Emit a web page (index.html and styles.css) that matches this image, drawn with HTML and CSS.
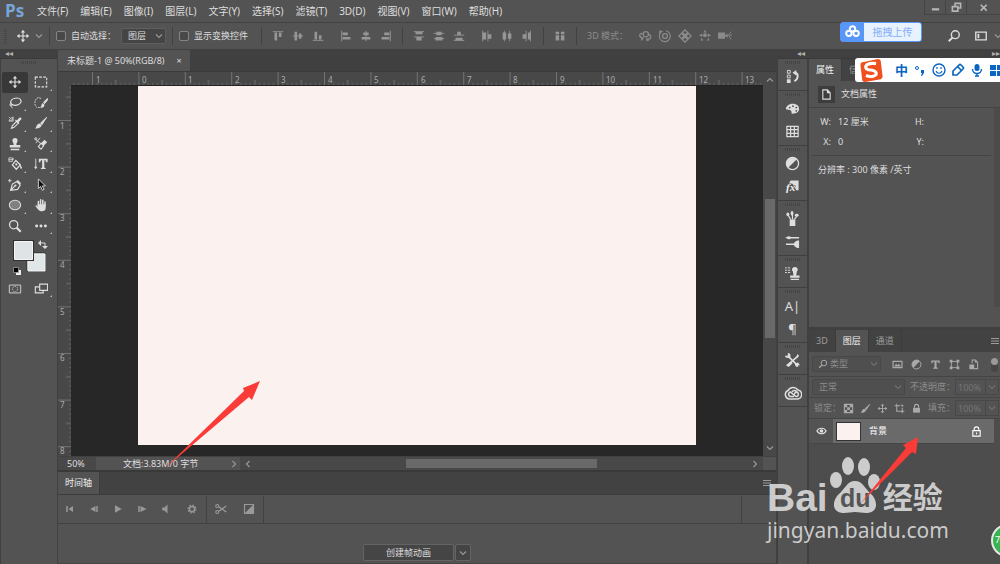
FILE: index.html
```html
<!DOCTYPE html>
<html lang="zh-CN">
<head>
    <meta charset="UTF-8">
    <meta name="viewport" content="width=device-width, initial-scale=1.0">
    <title>未标题-1 @ 50%(RGB/8)</title>
    <link rel="stylesheet" href="styles.css">
</head>
<body>
    <svg class="sprite" aria-hidden="true">
        <symbol id="move" viewBox="0 0 16 16"><path d="M8 2v12M2 8h12" stroke="currentColor" stroke-width="1.3"/><path d="M8 1l2.6 3H5.4zM8 15l2.6-3H5.4zM1 8l3-2.6v5.2zM15 8l-3-2.6v5.2z" fill="currentColor"/></symbol>
        <symbol id="chevron" viewBox="0 0 8 8"><path d="M1 2.5l3 3 3-3" fill="none" stroke="currentColor" stroke-width="1.1"/></symbol>
        <symbol id="brush" viewBox="0 0 16 16"><path d="M14.500 1.500L7.500 8l1.500 2z" fill="currentColor" stroke="currentColor"/><path d="M6.500 8.500l2.200 2.200C8 14 4 14.500 1 14.500c2-1.500 1.500-5.500 5.500-6z" fill="currentColor"/></symbol>
        <symbol id="stamp" viewBox="0 0 16 16"><path d="M8 1a3 3 0 0 1 3 3c0 2-1.500 2.500-1.500 5h4.500v3H2V9h4.500C6.500 6.500 5 6 5 4a3 3 0 0 1 3-3zM3 13.500h10V15H3z" fill="currentColor"/></symbol>
        <symbol id="menu" viewBox="0 0 10 8"><path d="M1 1.500h8M1 4h8M1 6.500h8" stroke="currentColor"/></symbol>
        <symbol id="search" viewBox="0 0 16 16"><circle cx="9.500" cy="6.500" r="4.500" fill="none" stroke="currentColor" stroke-width="1.600"/><path d="M6.200 9.800L2 14" stroke="currentColor" stroke-width="2.200"/></symbol>
        <symbol id="half" viewBox="0 0 16 16"><circle cx="8" cy="8" r="6.500" fill="none" stroke="currentColor" stroke-width="1.400"/><path d="M12.600 3.400A6.500 6.500 0 0 0 3.400 12.600z" fill="currentColor"/></symbol>
        <symbol id="lock" viewBox="0 0 16 16"><path d="M5 7V5a3 3 0 0 1 6 0v2" fill="none" stroke="currentColor" stroke-width="1.600"/><path d="M3 7h10v7H3z" fill="currentColor"/></symbol>
    </svg>

    <header class="menu-bar">
        <span class="logo">Ps</span>
        <nav>
            <button>文件(F)</button>
            <button>编辑(E)</button>
            <button>图像(I)</button>
            <button>图层(L)</button>
            <button>文字(Y)</button>
            <button>选择(S)</button>
            <button>滤镜(T)</button>
            <button>3D(D)</button>
            <button>视图(V)</button>
            <button>窗口(W)</button>
            <button>帮助(H)</button>
        </nav>
        <div class="window-buttons">
            <button aria-label="最小化"><svg viewBox="0 0 12 12"><path d="M2 8h8" stroke="currentColor" stroke-width="2.500"/></svg></button>
            <button aria-label="还原"><svg viewBox="0 0 12 12"><path d="M4.500 4V1.500h6v5H8M1.500 5h6v5h-6z" fill="none" stroke="currentColor" stroke-width="1.800"/></svg></button>
            <button class="close" aria-label="关闭"><svg viewBox="0 0 12 12"><path d="M3 3l6.500 6.500M9.500 3L3 9.500" stroke="currentColor" stroke-width="1.900"/></svg></button>
        </div>
    </header>

    <div class="options-bar">
        <span class="grip-v"></span>
        <button class="current-tool" aria-label="移动工具"><svg class="icon16"><use href="#move"/></svg><svg class="icon8"><use href="#chevron"/></svg></button>
        <span class="sep"></span>
        <label class="check"><input type="checkbox">自动选择：</label>
        <span class="select option-select"><select aria-label="自动选择"><option>图层</option></select><svg class="icon8"><use href="#chevron"/></svg></span>
        <span class="sep"></span>
        <label class="check"><input type="checkbox">显示变换控件</label>
        <span class="sep sep-wide"></span>
        <div class="icon-set">
            <button aria-label="顶对齐"><svg viewBox="0 0 16 16"><path d="M2 3h12" stroke="currentColor"/><path d="M4 4h3v9H4zM9 4h3v5H9z" fill="currentColor"/></svg></button>
            <button aria-label="垂直居中对齐"><svg viewBox="0 0 16 16"><path d="M2 8h12" stroke="currentColor"/><path d="M4 3h3v10H4zM9 5h3v6H9z" fill="currentColor"/></svg></button>
            <button aria-label="底对齐"><svg viewBox="0 0 16 16"><path d="M2 13h12" stroke="currentColor"/><path d="M4 3h3v9H4zM9 7h3v5H9z" fill="currentColor"/></svg></button>
        </div>
        <div class="icon-set">
            <button aria-label="左对齐"><svg viewBox="0 0 16 16"><path d="M3 2v12" stroke="currentColor"/><path d="M4 4h6v3H4zM4 9h9v3H4z" fill="currentColor"/></svg></button>
            <button aria-label="水平居中对齐"><svg viewBox="0 0 16 16"><path d="M8 2v12" stroke="currentColor"/><path d="M5 4h6v3H5zM3 9h10v3H3z" fill="currentColor"/></svg></button>
            <button aria-label="右对齐"><svg viewBox="0 0 16 16"><path d="M13 2v12" stroke="currentColor"/><path d="M6 4h6v3H6zM3 9h9v3H3z" fill="currentColor"/></svg></button>
        </div>
        <span class="sep"></span>
        <div class="icon-set">
            <button aria-label="按顶分布"><svg viewBox="0 0 16 16"><path d="M2 3h12M2 9h12" stroke="currentColor"/><path d="M4 3h8v3H4zM5 9h6v4H5z" fill="currentColor"/></svg></button>
            <button aria-label="垂直居中分布"><svg viewBox="0 0 16 16"><path d="M2 5h12M2 11h12" stroke="currentColor"/><path d="M5 3h6v4H5zM4 9h8v4H4z" fill="currentColor"/></svg></button>
            <button aria-label="按底分布"><svg viewBox="0 0 16 16"><path d="M2 7h12M2 13h12" stroke="currentColor"/><path d="M6 3h4v4H6zM4 10h8v3H4z" fill="currentColor"/></svg></button>
        </div>
        <div class="icon-set">
            <button aria-label="按左分布"><svg viewBox="0 0 16 16"><path d="M3 2v12M9 2v12" stroke="currentColor"/><path d="M3 4h4v8H3zM9 6h4v5H9z" fill="currentColor"/></svg></button>
            <button aria-label="水平居中分布"><svg viewBox="0 0 16 16"><path d="M5 2v12M11 2v12" stroke="currentColor"/><path d="M3 4h4v8H3zM9 5h4v6H9z" fill="currentColor"/></svg></button>
            <button aria-label="按右分布"><svg viewBox="0 0 16 16"><path d="M7 2v12M12 2v12" stroke="currentColor"/><path d="M3 6h4v5H3zM9 4h3v8H9z" fill="currentColor"/></svg></button>
        </div>
        <span class="sep"></span>
        <div class="icon-set">
            <button aria-label="自动对齐图层"><svg viewBox="0 0 16 16"><path d="M3 3h4v3H3zM9 3h4v3H9zM3 7h4v6H3zM9 7h4v6H9z" fill="currentColor"/></svg></button>
        </div>
        <span class="sep"></span>
        <span class="mode-label">3D 模式：</span>
        <div class="icon-set dim">
            <button aria-label="旋转 3D 对象"><svg viewBox="0 0 16 16"><path d="M5 10C1 9 1 6 4 5l3 1M11 6c4 0 4 3 3 5l-4 1" fill="none" stroke="currentColor" stroke-width="1.500"/><circle cx="9" cy="6" r="3" fill="none" stroke="currentColor" stroke-width="1.300"/><path d="M3 9l4 1-3 4zM9 10l1 4 3-1z" fill="currentColor"/></svg></button>
            <button aria-label="滚动 3D 对象"><svg viewBox="0 0 16 16"><path d="M3 4A6.300 6.300 0 1 0 9 2" fill="none" stroke="currentColor" stroke-width="1.300"/><circle cx="8" cy="8" r="2.800" fill="none" stroke="currentColor" stroke-width="1.500"/><path d="M1 5l1-4 4 2z" fill="currentColor"/></svg></button>
            <button aria-label="拖动 3D 对象"><svg viewBox="0 0 16 16"><path d="M8 1l3 3-3 3-3-3zM8 9l3 3-3 3-3-3zM1 8l3-3 3 3-3 3zM9 8l3-3 3 3-3 3z" fill="none" stroke="currentColor" stroke-width="1.500"/></svg></button>
            <button aria-label="滑动 3D 对象"><svg viewBox="0 0 16 16"><circle cx="8" cy="7" r="2.200" fill="currentColor"/><path d="M8 1l2 3H6zM1 7l4-2v4zM15 7l-4-2v4zM3 13l1-3 2 3zM13 13l-1-3-2 3z" fill="currentColor"/></svg></button>
            <button aria-label="缩放 3D 对象"><svg viewBox="0 0 16 16"><path d="M0 4h8v7H0zM8 7l3-2v5L8 8z" fill="currentColor"/><path d="M15 3l-3 4 3 5M13 7h3" fill="none" stroke="currentColor"/></svg></button>
        </div>
        <div class="options-right">
            <button aria-label="搜索"><svg class="icon16"><use href="#search"/></svg></button>
            <button aria-label="工作区"><svg class="icon16" viewBox="0 0 16 16"><path d="M2 3.500h12v9H2z" fill="none" stroke="currentColor" stroke-width="1.500"/><path d="M4 5.500h2v5H4z" fill="currentColor"/></svg><svg class="icon8"><use href="#chevron"/></svg></button>
        </div>
        <button class="upload"><svg viewBox="0 0 24 20"><g fill="none" stroke="#fff" stroke-width="2.200"><circle cx="12" cy="6.500" r="3"/><circle cx="8" cy="11.500" r="3"/><circle cx="16" cy="11.500" r="3"/></g></svg><span>拖拽上传</span></button>
    </div>

    <div class="workspace">
        <aside class="toolbox">
            <div class="dock-head">◂◂</div>
            <div class="tools-body">
                <span class="grip"></span>
                <div class="tools">
                    <button class="active" aria-label="移动工具"><svg><use href="#move"/></svg></button>
                    <button class="more" aria-label="矩形选框工具"><svg viewBox="0 0 16 16"><path d="M1.500 2.500h13v11h-13z" fill="none" stroke="currentColor" stroke-width="1.300" stroke-dasharray="3 1.500"/></svg></button>
                    <button class="more" aria-label="套索工具"><svg viewBox="0 0 16 16"><ellipse cx="9" cy="6.500" rx="6" ry="4" transform="rotate(-12 9 6.500)" fill="none" stroke="currentColor" stroke-width="1.400"/><path d="M4 8c-3 1-2 4 0 3s0-3-1-1 2 2 2 4" fill="none" stroke="currentColor"/></svg></button>
                    <button class="more" aria-label="快速选择工具"><svg viewBox="0 0 16 16"><path d="M8 3C4 0 1 4 1 8s2 6 6 5" fill="none" stroke="currentColor" stroke-dasharray="2 1"/><path d="M15.500 2l-5 5 1.500 2.500 4-5z" fill="currentColor"/><path d="M10 8l2 2c0 3-3 4-5 3 2-1 1-4 3-5z" fill="currentColor"/></svg></button>
                    <button class="more" aria-label="吸管工具"><svg viewBox="0 0 16 16"><path d="M1 1l3 3M1 5h4V1zM6 1v5H1" fill="none" stroke="currentColor" stroke-width=".8"/><path d="M4 14l1-3 5-5 2 2-5 5z" fill="none" stroke="currentColor" stroke-width="1.300"/><path d="M8 5l1-1 1 1 3-3c2-1 3 1 2 2l-3 3 1 1-1 1z" fill="currentColor"/></svg></button>
                    <button class="more" aria-label="画笔工具"><svg><use href="#brush"/></svg></button>
                    <button class="more" aria-label="仿制图章工具"><svg><use href="#stamp"/></svg></button>
                    <button class="more" aria-label="橡皮擦工具"><svg viewBox="0 0 16 16"><path d="M1 2l6 5M7 1L2 7" stroke="currentColor"/><circle cx="2" cy="2" r="1.200" fill="none" stroke="currentColor"/><path d="M12 3l3 3-4 4-3-3z" fill="currentColor"/><path d="M8 7l3 3-3 4-3-3z" fill="none" stroke="currentColor" stroke-width="1.300"/></svg></button>
                    <button class="more" aria-label="油漆桶工具"><svg viewBox="0 0 16 16"><path d="M1 1h4v4H1zM1 3h5V1" fill="none" stroke="currentColor" stroke-width=".9"/><path d="M9 4l5 5-4.500 5L5 9z" fill="none" stroke="currentColor" stroke-width="1.400"/><circle cx="9.500" cy="8.500" r="1.300" fill="currentColor"/><path d="M13 7l3 5c0 2-2 2-2 0z" fill="currentColor"/></svg></button>
                    <button class="more" aria-label="文字工具"><svg viewBox="0 0 16 16"><path d="M2 2v10" stroke="currentColor"/><path d="M0 11h4l-2 3zM5.500 2h10v4h-1.500L13 3.800h-1.200V12l1.500.8v1H7.800v-1l1.500-.8V3.800H8L7 6H5.500z" fill="currentColor"/></svg></button>
                    <button class="more" aria-label="钢笔工具"><svg viewBox="0 0 16 16"><path d="M0 3h4M2 1v4" stroke="currentColor"/><path d="M3 14l2-7 5-3 4 4-3 5zM3 14l5-5" fill="none" stroke="currentColor" stroke-width="1.300"/><path d="M11 2l4 4-1.500 1L10 4z" fill="currentColor"/><circle cx="8.500" cy="8.500" r="1.200" fill="currentColor"/></svg></button>
                    <button class="more" aria-label="路径选择工具"><svg viewBox="0 0 16 16"><path d="M5 1v11l2.500-2.500L9.500 14l2-1-2-4H13z" fill="#111" stroke="currentColor"/></svg></button>
                    <button class="more" aria-label="椭圆工具"><svg viewBox="0 0 16 16"><ellipse cx="8" cy="8" rx="6.500" ry="5.500" fill="#808080" stroke="currentColor" stroke-width="1.200"/></svg></button>
                    <button class="more" aria-label="抓手工具"><svg viewBox="0 0 16 16"><path d="M5 9V4M7.500 8V2M10 8V2.500M12.500 9V4.500" stroke="currentColor" stroke-width="1.700" stroke-linecap="round"/><path d="M4 7h9.400v4c0 3-2 4-4.400 4-3 0-4-1.500-7.500-6 1-1.500 2 0 3 1z" fill="currentColor"/></svg></button>
                    <button aria-label="缩放工具"><svg viewBox="0 0 16 16"><circle cx="6.500" cy="6.500" r="4.700" fill="none" stroke="currentColor" stroke-width="1.500"/><path d="M10 10l4.500 4.500" stroke="currentColor" stroke-width="2.600"/></svg></button>
                    <button class="more" aria-label="编辑工具栏"><svg viewBox="0 0 16 16"><circle cx="3" cy="8" r="1.700" fill="currentColor"/><circle cx="8" cy="8" r="1.700" fill="currentColor"/><circle cx="13" cy="8" r="1.700" fill="currentColor"/></svg></button>
                </div>
                <svg class="swatches" viewBox="0 0 54 40"><path d="M26 14h18v18H26z" fill="#e1e6e8" stroke="#303030"/><path d="M27 15h17v17H27z" fill="#e1e6e8" stroke="#f5f5f5"/><path d="M12 1h21v21H12z" fill="#303030"/><path d="M13.500 2.500h18v18h-18z" fill="#dfe3e5" stroke="#f5f5f5"/><path d="M40 4h4v4" fill="none" stroke="#ddd"/><path d="M37 4l3-3v6zM44 10l-3-3h6z" fill="#ddd"/><path d="M15 31h5v5h-5z" fill="#eee"/><path d="M12.500 28.500h5v5h-5z" fill="#000" stroke="#aaa" stroke-width=".7"/></svg>
                <div class="screen-modes">
                    <button aria-label="快速蒙版"><svg viewBox="0 0 16 16"><path d="M1.500 3.500h13v9h-13z" fill="none" stroke="currentColor"/><circle cx="8" cy="8" r="3" fill="none" stroke="currentColor" stroke-dasharray="1 1"/></svg></button>
                    <button class="more" aria-label="屏幕模式"><svg viewBox="0 0 16 16"><path d="M6.500 2.500h9v7h-9zM6 5.500H1.500v7h9V10" fill="none" stroke="currentColor" stroke-width="1.300"/></svg></button>
                </div>
            </div>
        </aside>

        <main class="center">
            <div class="doc-tabs">
                <div class="doc-tab">未标题-1 @ 50%(RGB/8)<button aria-label="关闭文档">×</button></div>
            </div>
            <div class="editor">
                <div class="corner"></div>
                <svg class="ruler-h" height="14">
                    <defs><pattern id="cmH" x="21" width="46.400" height="14" patternUnits="userSpaceOnUse"><path d="M.5 0v14M23.700 8v6" stroke="#727272"/><path d="M5.100 11v3M9.800 11v3M14.400 11v3M19 11v3M28.300 11v3M33 11v3M37.600 11v3M42.200 11v3" stroke="#636363"/></pattern></defs>
                    <rect width="100%" height="14" fill="url(#cmH)"/>
                    <g class="ruler-text"><text x="25" y="11">1</text><text x="71" y="11">0</text><text x="117" y="11">1</text><text x="164" y="11">2</text><text x="210" y="11">3</text><text x="257" y="11">4</text><text x="303" y="11">5</text><text x="350" y="11">6</text><text x="396" y="11">7</text><text x="442" y="11">8</text><text x="489" y="11">9</text><text x="535" y="11">10</text><text x="582" y="11">11</text><text x="628" y="11">12</text><text x="674" y="11">13</text></g>
                </svg>
                <svg class="ruler-v" width="13">
                    <defs><pattern id="cmV" y="34" width="13" height="46.600" patternUnits="userSpaceOnUse"><path d="M0 .5h13M8 23.700h5" stroke="#727272"/><path d="M11 5.100h2M11 9.800h2M11 14.400h2M11 19h2M11 28.300h2M11 33h2M11 37.600h2M11 42.200h2" stroke="#636363"/></pattern></defs>
                    <rect width="13" height="100%" fill="url(#cmV)"/>
                    <g class="ruler-text"><text x="2" y="43">1</text><text x="2" y="89">2</text><text x="2" y="135">3</text><text x="2" y="182">4</text><text x="2" y="229">5</text><text x="2" y="275">6</text><text x="2" y="322">7</text><text x="2" y="368">8</text></g>
                </svg>
                <div class="stage"><div class="artboard"></div></div>
                <div class="scroll-v">
                    <svg class="icon8 flip"><use href="#chevron"/></svg>
                    <div class="thumb-v"></div>
                    <svg class="icon8"><use href="#chevron"/></svg>
                </div>
            </div>
            <div class="status">
                <span class="zoom">50%</span>
                <span class="doc-size">文档:3.83M/0 字节</span>
                <svg class="icon8 right"><use href="#chevron"/></svg>
                <div class="scroll-h"><svg class="icon8 left"><use href="#chevron"/></svg><div class="thumb-h"></div><svg class="icon8 right"><use href="#chevron"/></svg></div>
            </div>
            <section class="timeline">
                <div class="panel-tabs"><button class="active">时间轴</button><button class="panel-menu" aria-label="菜单"><svg><use href="#menu"/></svg></button></div>
                <div class="controls">
                    <button aria-label="第一帧"><svg viewBox="0 0 16 16"><path d="M4 4v8" stroke="currentColor" stroke-width="2"/><path d="M12 4v8L6 8z" fill="currentColor"/></svg></button>
                    <button aria-label="上一帧"><svg viewBox="0 0 16 16"><path d="M12 4v8" stroke="currentColor" stroke-width="2"/><path d="M10 4v8L3 8z" fill="currentColor"/></svg></button>
                    <button aria-label="播放"><svg viewBox="0 0 16 16"><path d="M4 3v10l9-5z" fill="currentColor"/></svg></button>
                    <button aria-label="下一帧"><svg viewBox="0 0 16 16"><path d="M4 4v8" stroke="currentColor" stroke-width="2"/><path d="M6 4v8l8-4z" fill="currentColor"/></svg></button>
                    <button aria-label="音频"><svg viewBox="0 0 16 16"><path d="M3 6h3l4-4v12l-4-4H3z" fill="currentColor"/></svg></button>
                    <button class="wide" aria-label="设置"><svg viewBox="0 0 16 16"><circle cx="8" cy="8" r="3.500" fill="none" stroke="currentColor" stroke-width="2"/><circle cx="8" cy="8" r="5.200" fill="none" stroke="currentColor" stroke-width="1.600" stroke-dasharray="2 2.080"/></svg></button>
                    <span class="rule"></span>
                    <button class="wide" aria-label="拆分"><svg viewBox="0 0 16 16"><circle cx="3" cy="4" r="2" fill="none" stroke="currentColor" stroke-width="1.500"/><circle cx="3" cy="12" r="2" fill="none" stroke="currentColor" stroke-width="1.500"/><path d="M5 5l10 7M5 11l10-7" stroke="currentColor" stroke-width="1.700"/></svg></button>
                    <button class="wide" aria-label="过渡"><svg viewBox="0 0 16 16"><path d="M2 2h12v12H2z" fill="none" stroke="currentColor" stroke-width="1.500"/><path d="M14 2v12H2z" fill="currentColor"/></svg></button>
                    <span class="rule"></span>
                    <span class="rule last"></span>
                </div>
                <div class="timeline-body"><button class="create">创建帧动画</button><button class="create-more" aria-label="更多"><svg class="icon8"><use href="#chevron"/></svg></button></div>
            </section>
            <svg class="arrow arrow-canvas" viewBox="0 0 96 88" aria-hidden="true"><path d="M0 88L80 10l-1-3L96 0 88 19l-3-3z"/></svg>
        </main>

        <aside class="dock">
            <div class="dock-head">◂◂</div>
            <div class="dock-group"><span class="grip"></span><button aria-label="历史记录"><svg viewBox="0 0 16 16"><path d="M2.500 1.500h3v3h-3zM2.500 6.500h3v3h-3z" fill="none" stroke="currentColor"/><path d="M2 11h4v4H2zM8 4l4-3v6z" fill="currentColor"/><path d="M11 4c4 1 3 7-1 9" fill="none" stroke="currentColor" stroke-width="2"/></svg></button></div>
            <div class="dock-group"><span class="grip"></span><button aria-label="颜色"><svg viewBox="0 0 16 16"><path d="M8 3c5 0 7 2.500 7 5.500S12 13.500 8 13.500c-2 0 0-2.500-2-3.500S1 10 1 8s3-5 7-5z" fill="currentColor"/><g fill="#535353"><circle cx="5" cy="7" r="1"/><circle cx="8.500" cy="5.500" r="1"/><circle cx="12" cy="7" r="1"/><circle cx="12" cy="10.500" r="1"/></g></svg></button><button aria-label="色板"><svg viewBox="0 0 16 16"><path d="M2 2.500h12v11H2zM6 2v12M10 2v12M2 6h12M2 10h12" fill="none" stroke="currentColor" stroke-width="1.300"/></svg></button></div>
            <div class="dock-group"><span class="grip"></span><button aria-label="调整"><svg><use href="#half"/></svg></button><button aria-label="样式"><svg viewBox="0 0 16 16"><path d="M6 1.500h8.500V12H12L8 5H4z" fill="currentColor"/><text class="fx" x="1" y="13">fx</text></svg></button></div>
            <div class="dock-group"><span class="grip"></span><button aria-label="画笔预设"><svg viewBox="0 0 16 16"><path d="M5 9h6v7H5z" fill="currentColor"/><path d="M6 9L3 4M8 9V4M10 9l3-4" stroke="currentColor" stroke-width="1.300"/><ellipse cx="3" cy="3.500" rx="1.500" ry="2" fill="currentColor"/><ellipse cx="7.500" cy="2.500" rx="1.500" ry="2.500" fill="currentColor"/><ellipse cx="12.500" cy="4.500" rx="2" ry="1.500" fill="currentColor"/></svg></button><button aria-label="画笔"><svg viewBox="0 0 16 16"><path d="M5 4h10M1 11h9" stroke="currentColor" stroke-width="1.600"/><path d="M0 4c2 0 3-3 6-1v2c-3 2-4-1-6-1zM9 11c2-4 4-4 6-4v8c-2 0-4 0-6-4z" fill="currentColor"/></svg></button></div>
            <div class="dock-group"><span class="grip"></span><button aria-label="仿制源"><svg viewBox="0 0 16 16"><path d="M0 2h2M0 4.500h2M0 7h2M3 2h2.500M3 4.500h2.500M3 7h2.500" stroke="currentColor"/><path d="M10.500 1a2.800 2.800 0 0 1 2 5l-.5 4h3.500v2.500h-10V10H9l-.5-4a2.800 2.800 0 0 1 2-5zM6 13.500h9V15H6z" fill="currentColor"/></svg></button></div>
            <div class="dock-group"><span class="grip"></span><button class="glyph" aria-label="字符">A|</button><button class="glyph" aria-label="段落">¶</button></div>
            <div class="dock-group"><span class="grip"></span><button aria-label="工具预设"><svg viewBox="0 0 16 16"><path d="M3 3l10 10M14 3L3 13" stroke="currentColor" stroke-width="1.700"/><path d="M1 13l5-4 2 2-4 4zM0 3l3 0V0c4 0 3 5 2 5-2 1-5 0-5-2zM11 11l3-1 2 3h-2v2c-3 0-4-2-3-4zM13 1l2 2-3 3z" fill="currentColor"/></svg></button></div>
            <div class="dock-group"><span class="grip"></span><button aria-label="库"><svg class="cloud" viewBox="0 0 18 16"><path d="M5 14a4.500 4.500 0 0 1-1-8.500A6 6 0 0 1 14 5a4.600 4.600 0 0 1 0 9z" fill="none" stroke="currentColor" stroke-width="1.500"/><path d="M10 11.500H6A2.500 2.500 0 0 1 6 7c2 0 4 4.500 7 4.500a2.500 2.500 0 0 0 0-4.500c-2 0-2 1.500-3 2M8 7c1-2 4-2 5 0" fill="none" stroke="currentColor" stroke-width="1.500"/></svg></button></div>
            <div class="dock-rest"></div>
        </aside>

        <aside class="panels">
            <div class="dock-head end">▸▸</div>
            <section class="properties">
                <div class="panel-tabs"><button class="active">属性</button><button>信息</button></div>
                <div class="prop-title"><span class="prop-icon"><svg viewBox="0 0 12 12"><path d="M2 1h5l3 3v7H2zM7 1v3h3" fill="none" stroke="currentColor" stroke-width="1.200"/></svg></span>文档属性</div>
                <div class="prop-body">
                    <dl>
                        <dt>W:</dt><dd>12 厘米</dd><dt>H:</dt><dd></dd>
                        <dt>X:</dt><dd>0</dd><dt>Y:</dt><dd></dd>
                    </dl>
                    <p>分辨率 : 300 像素 /英寸</p>
                </div>
            </section>
            <section class="layers">
                <div class="panel-tabs"><button>3D</button><button class="active">图层</button><button>通道</button><button class="panel-menu" aria-label="菜单"><svg><use href="#menu"/></svg></button></div>
                <div class="layer-row filter-row">
                    <span class="select filter-select"><svg class="lead"><use href="#search"/></svg><select aria-label="滤镜类型"><option>类型</option></select><svg class="icon8"><use href="#chevron"/></svg></span>
                    <div class="mini-icons">
                        <button aria-label="像素"><svg viewBox="0 0 16 16"><path d="M1.500 3.500h13v9h-13z" fill="none" stroke="currentColor" stroke-width="1.700"/><path d="M3 11l3-4 2 2 2-2 3 4z" fill="currentColor"/></svg></button>
                        <button aria-label="调整"><svg><use href="#half"/></svg></button>
                        <button aria-label="文字"><svg viewBox="0 0 16 16"><path d="M2 2h12v4h-1.500L11.500 4H9.500v8l2 1v1h-7v-1l2-1V4H4.500L3.500 6H2z" fill="currentColor"/></svg></button>
                        <button aria-label="形状"><svg viewBox="0 0 16 16"><path d="M3.500 3.500h9v9h-9z" fill="none" stroke="currentColor" stroke-width="1.300"/><path d="M1 1h4v4H1zM11 1h4v4h-4zM1 11h4v4H1zM11 11h4v4h-4z" fill="currentColor"/></svg></button>
                        <button aria-label="智能对象"><svg viewBox="0 0 16 16"><path d="M6 6V1.500h5L14 5v9H9" fill="none" stroke="currentColor" stroke-width="1.500"/><path d="M2 8h7v7H2zM10 1l4 4h-4z" fill="currentColor"/></svg></button>
                    </div>
                    <button class="toggle" aria-label="滤镜开关"></button>
                </div>
                <div class="layer-row">
                    <span class="select blend-select"><select aria-label="混合模式"><option>正常</option></select><svg class="icon8"><use href="#chevron"/></svg></span>
                    <label class="amount">不透明度：<input type="text" value="100%"></label><button class="amount-more" aria-label="不透明度滑块"><svg class="icon8"><use href="#chevron"/></svg></button>
                </div>
                <div class="layer-row">
                    <span class="lock-label">锁定：</span>
                    <div class="mini-icons locks">
                        <button aria-label="锁定透明像素"><svg viewBox="0 0 16 16"><path d="M2 2h12v12H2z" fill="none" stroke="currentColor" stroke-width="1.500"/><path d="M2 2h4v4H2zM10 2h4v4h-4zM6 6h4v4H6zM2 10h4v4H2zM10 10h4v4h-4z" fill="currentColor"/></svg></button>
                        <button aria-label="锁定图像像素"><svg><use href="#brush"/></svg></button>
                        <button aria-label="锁定位置"><svg><use href="#move"/></svg></button>
                        <button aria-label="锁定画板"><svg viewBox="0 0 16 16"><path d="M4 1v11h11M1 4h8M12 7v8" fill="none" stroke="currentColor" stroke-width="1.500"/><path d="M10 2l4 1-2 3z" fill="currentColor"/></svg></button>
                        <button aria-label="锁定全部"><svg><use href="#lock"/></svg></button>
                    </div>
                    <label class="amount">填充：<input type="text" value="100%"></label><button class="amount-more" aria-label="填充滑块"><svg class="icon8"><use href="#chevron"/></svg></button>
                </div>
                <div class="layer-list">
                    <div class="layer">
                        <button class="eye" aria-label="可见性"><svg viewBox="0 0 12 10"><path d="M1 5c2-4 8-4 10 0-2 4-8 4-10 0z" fill="none" stroke="currentColor" stroke-width="1.300"/><circle cx="6" cy="5" r="2" fill="currentColor"/></svg></button>
                        <div class="layer-main"><span class="thumb"></span><span>背景</span><svg class="layer-lock" viewBox="0 0 12 12"><path d="M3.500 5V3.500a2.500 2.500 0 0 1 5 0V5M2 5h8v6H2zM6 7v2" fill="none" stroke="currentColor" stroke-width="1.200"/></svg></div>
                    </div>
                </div>
            </section>
        </aside>
    </div>

    <div class="ime-bar">
        <svg class="ime-logo" viewBox="0 0 26 26" aria-hidden="true"><path d="M2 5L20 1q2 0 3 2l2 17q0 2-2 3L6 26q-2 0-3-2L1 8q0-2 1-3z" fill="#f0501e"/><path d="M18 6C9 5 6 8 7 11s10 1 11 5-6 5-11 3" fill="none" stroke="#fff" stroke-width="3.400"/></svg>
        <span class="ime-cn">中</span>
        <svg viewBox="0 0 14 14"><circle cx="4" cy="5" r="1.500" fill="none" stroke="currentColor"/><path d="M8 7h3v3l-2 3H8l1-3H8z" fill="currentColor"/></svg>
        <svg viewBox="0 0 14 14"><circle cx="7" cy="7" r="6" fill="none" stroke="currentColor" stroke-width="1.400"/><path d="M4 8c1 3 5 3 6 0M5 4v2M9 4v2" fill="none" stroke="currentColor" stroke-width="1.200"/></svg>
        <svg viewBox="0 0 14 14"><path d="M2 12V8l6-6q1-1 2 0l2 2q1 1 0 2l-6 6zM7 4l3 3" fill="none" stroke="currentColor" stroke-width="1.700"/></svg>
        <svg viewBox="0 0 14 14"><rect x="4.500" y="1" width="5" height="7" rx="2.500" fill="currentColor"/><path d="M2.500 6c0 6 9 6 9 0M7 10v3M5 13h4" fill="none" stroke="currentColor" stroke-width="1.400"/></svg>
        <svg viewBox="0 0 14 14"><path d="M1 2h6v5H1zM8 2h6v5H8zM1 8h6v5H1zM8 8h6v5H8z" fill="currentColor"/></svg>
    </div>

    <div class="watermark">
        <div class="brand">
            <span>Bai</span>
            <svg viewBox="0 0 52 56" aria-hidden="true"><g fill="currentColor"><ellipse cx="7" cy="23" rx="6" ry="8"/><ellipse cx="19" cy="9" rx="6" ry="9"/><ellipse cx="35" cy="10" rx="6" ry="9"/><ellipse cx="45" cy="25" rx="6" ry="8"/><path d="M26 24c8 0 10 8 16 13s9 19-5 19c-4 0-7-1-11-1s-7 1-11 1C1 56 4 42 10 37s8-13 16-13z"/></g><text class="du" x="11" y="50">du</text></svg>
            <span class="brand-cn">经验</span>
        </div>
        <div class="domain">jingyan.baidu.com</div>
    </div>
    <svg class="arrow arrow-layer" viewBox="0 0 60 68" aria-hidden="true"><path d="M0 67L46 11l-3-3L58 0 56 17l-4-2z"/></svg>
    <div class="speed-ball">7</div>
</body>
</html>
```
FILE: styles.css
```css
* {
    box-sizing: border-box;
}
body {
    margin: 0;
    min-height: 100vh;
    display: flex;
    flex-direction: column;
    position: relative;
    overflow: hidden;
    background: #535353;
    color: #dedede;
    font-family: "Noto Sans", "Noto Sans CJK SC", sans-serif;
    font-size: 9px;
    line-height: 14px;
}
button, input, select {
    margin: 0;
    padding: 0;
    border: 0;
    background: none;
    color: inherit;
    font: inherit;
}
button {
    display: flex;
    align-items: center;
    justify-content: center;
    white-space: nowrap;
}
svg {
    flex: none;
}
.sprite {
    position: absolute;
    width: 0;
    height: 0;
}
.icon16 {
    width: 14px;
    height: 14px;
}
.icon8 {
    width: 8px;
    height: 8px;
    color: #9a9a9a;
}

/* menu bar */
.menu-bar {
    display: flex;
    height: 23px;
    border-bottom: 1px solid #424242;
}
.logo {
    width: 37px;
    padding-left: 5px;
    color: #76a7d8;
    font: bold 17px/21px "Open Sans", sans-serif;
}
nav {
    display: flex;
    gap: 12px;
    height: 21px;
    font-size: 10px;
}
.window-buttons {
    display: flex;
    height: 15px;
    margin-left: auto;
    border: 1px solid #454545;
    border-top: 0;
    border-right: 0;
}
.window-buttons button {
    width: 21px;
    border-right: 1px solid #454545;
}
.window-buttons .close {
    width: 33px;
    border: 0;
}
.window-buttons svg {
    width: 11px;
    height: 11px;
    color: #b5b5b5;
}

/* options bar */
.options-bar {
    display: flex;
    align-items: center;
    height: 27px;
    position: relative;
    border-bottom: 1px solid #404040;
}
.grip-v {
    width: 3px;
    height: 15px;
    margin-left: 4px;
    background: repeating-linear-gradient(#464646 0 1px, transparent 1px 2px);
}
.current-tool {
    justify-content: flex-start;
    width: 36px;
    gap: 5px;
    padding-left: 9px;
}
.sep {
    width: 1px;
    height: 18px;
    margin: 0 6px;
    background: #424242;
}
.sep-wide {
    margin-left: 13px;
}
.check {
    display: flex;
    align-items: center;
    white-space: nowrap;
}
.check input {
    appearance: none;
    width: 10px;
    height: 10px;
    margin-right: 5px;
    border: 1px solid #858585;
    border-radius: 2px;
    background: #484848;
}
.select {
    display: flex;
    align-items: center;
    position: relative;
    height: 16px;
    border: 1px solid #5f5f5f;
    border-radius: 2px;
    background: #454545;
}
.select select {
    appearance: none;
    width: 100%;
    height: 14px;
    padding-left: 6px;
}
.select .icon8 {
    position: absolute;
    right: 2px;
    pointer-events: none;
}
.option-select {
    width: 45px;
    margin-left: 5px;
}
.icon-set {
    display: flex;
    color: #969696;
}
.icon-set + .icon-set {
    margin-left: 8px;
}
.icon-set button {
    width: 20px;
}
.icon-set svg {
    width: 14px;
    height: 14px;
}
.icon-set.dim {
    color: #8a8a8a;
}
.mode-label {
    width: 52px;
    padding-left: 4px;
    color: #8c8c8c;
    white-space: nowrap;
}
.options-right {
    display: flex;
    gap: 13px;
    margin-left: auto;
}
.options-right button {
    gap: 6px;
}
.options-right button:last-child {
    margin-right: -2px;
}
.upload {
    position: absolute;
    right: 78px;
    top: -1px;
    width: 82px;
    height: 20px;
    border: 1px solid #5896f8;
    border-radius: 3px;
    overflow: hidden;
    background: #5896f8;
    color: #82aef8;
}
.upload svg {
    width: 23px;
    height: 18px;
}
.upload span {
    flex: 1;
    background: #e8f1fe;
    font-size: 10px;
    line-height: 18px;
}

/* workspace */
.workspace {
    flex: 1;
    display: grid;
    grid-template-columns: 57px 1fr 32px 191px;
    background: #404040;
}
.dock-head {
    height: 9px;
    padding-left: 4px;
    color: #b0b0b0;
    font: 8px/8px "DejaVu Sans", sans-serif;
    border-bottom: 1px solid #3a3a3a;
}
.dock-head.end {
    padding: 0;
    text-align: right;
}
.grip {
    display: block;
    width: 16px;
    height: 3px;
    margin: 2px auto 0;
    background: repeating-linear-gradient(90deg, #454545 0 1px, transparent 1px 2px);
}

/* tools */
.toolbox {
    display: flex;
    flex-direction: column;
    padding-left: 1px;
}
.tools-body {
    flex: 1;
    background: #535353;
}
.tools {
    display: grid;
    grid-template: repeat(8, 1fr) / 26px 26px;
    height: 164px;
    margin-top: 8px;
    padding-left: 1px;
}
.tools button, .screen-modes button {
    position: relative;
    border-radius: 2px;
}
.tools .active {
    background: #383838;
}
.tools svg, .screen-modes svg {
    width: 14px;
    height: 14px;
}
.more::after {
    content: "";
    position: absolute;
    right: 2px;
    bottom: 2px;
    border: 1px solid #bbb;
    border-top-color: transparent;
    border-left-color: transparent;
}
.swatches {
    display: block;
    width: 54px;
    height: 40px;
    margin-top: 3px;
}
.screen-modes {
    display: grid;
    grid-template: 20px / 26px 26px;
    padding-left: 1px;
}

/* document */
.center {
    display: flex;
    flex-direction: column;
    position: relative;
    min-width: 0;
    padding: 0 1px;
}
.doc-tabs {
    display: flex;
    height: 22px;
    border-bottom: 1px solid #3a3a3a;
}
.doc-tab {
    display: flex;
    align-items: center;
    gap: 12px;
    padding: 0 8px 0 9px;
    background: #535353;
}
.editor {
    flex: 1;
    display: grid;
    grid-template: 14px 1fr / 13px 1fr 13px;
}
.corner, .ruler-h, .ruler-v, .scroll-v {
    background: #484848;
}
.ruler-h, .ruler-v {
    display: block;
    width: 100%;
    height: 100%;
}
.ruler-h {
    border-bottom: 1px solid #222;
}
.ruler-v {
    grid-column: 1;
    grid-row: 2;
}
.ruler-text {
    fill: #aaa;
    font-size: 8px;
}
.stage {
    display: flex;
    grid-column: 2;
    background: #272727;
}
.artboard {
    flex: 1;
    margin: 0 67px 11px;
    background: #fbf1ef;
}
.scroll-v {
    display: flex;
    flex-direction: column;
    align-items: center;
    grid-column: 3;
    grid-row: 1 / 3;
    padding: 4px 0;
}
.scroll-v .icon8:last-child {
    margin-top: auto;
}
.flip {
    transform: rotate(180deg);
}
.left {
    transform: rotate(90deg);
}
.right {
    transform: rotate(-90deg);
}
.thumb-v {
    width: 10px;
    height: 37%;
    margin-top: 115px;
    background: #696969;
}
.status {
    display: flex;
    align-items: center;
    height: 14px;
    padding-right: 13px;
    border-top: 1px solid #414141;
    background: #535353;
}
.zoom {
    width: 38px;
    padding-left: 9px;
    background: #484848;
}
.doc-size {
    width: 134px;
    padding-left: 27px;
}
.scroll-h {
    flex: 1;
    display: flex;
    align-items: center;
    justify-content: space-between;
    height: 13px;
    margin-left: 2px;
    padding: 0 4px;
    background: #484848;
}
.thumb-h {
    width: 37%;
    height: 9px;
    background: #696969;
}

/* panel tabs */
.panel-tabs {
    display: flex;
    height: 22px;
    background: #424242;
    color: #9c9c9c;
}
.panel-tabs button {
    padding: 0 7px;
    border-right: 1px solid #3c3c3c;
}
.panel-tabs .active {
    background: #535353;
    color: #f0f0f0;
}
.panel-tabs .panel-menu {
    margin-left: auto;
    padding: 0;
    border: 0;
}
.panel-menu svg {
    width: 10px;
    height: 8px;
}

/* timeline */
.timeline {
    height: 94px;
    border-top: 2px solid #393939;
    background: #535353;
}
.timeline .panel-menu {
    margin-right: 4px;
}
.controls {
    display: flex;
    align-items: center;
    height: 30px;
    border-top: 1px solid #3c3c3c;
    border-bottom: 1px solid #414141;
    color: #999;
}
.controls button {
    width: 24px;
}
.controls svg {
    width: 12px;
    height: 12px;
}
.controls .wide {
    width: 28px;
}
.rule {
    width: 1px;
    height: 27px;
    background: #424242;
}
.rule.last {
    margin: 0 34px 0 auto;
}
.timeline-body {
    display: flex;
    justify-content: center;
    gap: 1px;
    height: 40px;
    padding-top: 20px;
    border-bottom: 1px solid #454545;
}
.timeline-body button {
    height: 17px;
    border: 1px solid #646464;
    border-radius: 2px;
    background: #454545;
}
.create {
    width: 91px;
}
.create-more {
    width: 16px;
}

/* icon dock */
.dock {
    display: flex;
    flex-direction: column;
    padding: 0 2px 0 1px;
}
.dock .dock-head {
    padding-left: 19px;
}
.dock-group {
    padding: 1px 0 2px;
    border-bottom: 1px solid #3f3f3f;
    background: #535353;
}
.dock-group .grip {
    margin: 1px auto 0;
}
.dock-group button {
    width: 100%;
    height: 23px;
    margin-top: 1px;
}
.dock-group button + button {
    margin-top: 0;
}
.dock-group svg {
    width: 15px;
    height: 15px;
}
.dock-group .cloud {
    width: 18px;
    height: 16px;
}
.dock-group .glyph {
    font-size: 13px;
}
.fx {
    fill: #eee;
    stroke: #535353;
    stroke-width: 1px;
    paint-order: stroke;
    font: italic bold 12px "Liberation Serif", serif;
}
.dock-rest {
    flex: 1;
    background: #535353;
}

/* right panels */
.panels {
    display: flex;
    flex-direction: column;
    min-width: 0;
}
.properties {
    height: 268px;
    background: #535353;
}
.prop-title {
    display: flex;
    align-items: center;
    gap: 6px;
    height: 27px;
    padding-left: 9px;
    border-bottom: 1px solid #454545;
}
.prop-icon {
    display: flex;
    align-items: center;
    justify-content: center;
    width: 17px;
    height: 17px;
    background: #3d3d3d;
}
.prop-icon svg {
    width: 11px;
    height: 11px;
}
.prop-body {
    height: 199px;
    padding: 4px 3px 0;
    border-right: 6px solid #4b4b4b;
}
.prop-body dl {
    display: grid;
    grid-template-columns: 19px 60px 19px 1fr;
    column-gap: 7px;
    height: 44px;
    grid-auto-rows: 20px;
    margin: 0;
    border-bottom: 1px solid #454545;
    line-height: 20px;
}
.prop-body dt {
    text-align: right;
}
.prop-body dd {
    margin: 0;
}
.prop-body p {
    margin: 7px 6px;
}
.layers {
    flex: 1;
    display: flex;
    flex-direction: column;
    margin-top: 3px;
    background: #535353;
}
.layer-row {
    display: flex;
    align-items: center;
    height: 21px;
    padding-left: 3px;
    border-bottom: 1px solid #454545;
    color: #8c8c8c;
}
.filter-row {
    height: 25px;
}
.layer-row .select {
    border-color: #484848;
    background: #4f4f4f;
}
.layer-row .icon8 {
    color: #707070;
}
.filter-select {
    width: 69px;
}
.filter-select .lead {
    width: 10px;
    height: 10px;
    margin-left: 5px;
    color: #aaa;
}
.filter-select select {
    padding-left: 2px;
}
.blend-select {
    width: 93px;
}
.mini-icons {
    display: flex;
    margin-left: 7px;
    color: #aaa;
}
.mini-icons button {
    width: 19px;
}
.mini-icons svg {
    width: 11px;
    height: 11px;
}
.lock-label {
    width: 28px;
    padding-left: 2px;
    white-space: nowrap;
}
.locks {
    margin: 0;
}
.locks button {
    width: 17px;
}
.toggle {
    align-self: flex-start;
    align-items: flex-start;
    width: 7px;
    height: 14px;
    margin: 6px 2px 0 auto;
    border-radius: 4px;
    background: #464646;
}
.toggle::before {
    content: "";
    width: 7px;
    height: 7px;
    border-radius: 50%;
    background: #9a9a9a;
}
.amount {
    display: flex;
    align-items: center;
    margin-left: auto;
    white-space: nowrap;
}
.amount input {
    width: 31px;
    height: 16px;
    padding-left: 2px;
    border: 1px solid #484848;
    color: #757575;
}
.amount-more {
    width: 13px;
    height: 16px;
    margin-right: 1px;
    border: 1px solid #484848;
    border-left: 0;
}
.layer-list {
    flex: 1;
    background: #4d4d4d;
}
.layer {
    display: flex;
    height: 25px;
    margin-right: 6px;
    border-bottom: 1px solid #464646;
}
.eye {
    width: 24px;
    background: #535353;
}
.eye svg {
    width: 11px;
    height: 10px;
}
.layer-main {
    flex: 1;
    display: flex;
    align-items: center;
    gap: 8px;
    padding: 0 12px 0 3px;
    background: #6a6a6a;
    color: #fff;
}
.thumb {
    width: 25px;
    height: 19px;
    border: 1px solid #333;
    background: #fbf1ef;
}
.layer-lock {
    width: 11px;
    height: 11px;
    margin-left: auto;
}

/* floating things */
.ime-bar {
    position: absolute;
    top: 58px;
    right: 0;
    display: flex;
    align-items: center;
    gap: 5px;
    width: 145px;
    height: 24px;
    overflow: hidden;
    border-radius: 3px 0 0 3px;
    background: #fff;
    color: #0b65c2;
}
.ime-bar svg {
    width: 14px;
    height: 14px;
}
.ime-bar .ime-logo {
    width: 25px;
    height: 24px;
    margin: 0 6px 0 4px;
}
.ime-cn {
    width: 14px;
    font-size: 13px;
    font-weight: bold;
}
.arrow {
    position: absolute;
    fill: #fb3b38;
}
.arrow-canvas {
    left: 107px;
    top: 331px;
    width: 96px;
    height: 88px;
}
.arrow-layer {
    right: 80px;
    top: 437px;
    width: 60px;
    height: 68px;
}
.watermark {
    position: absolute;
    right: 54px;
    bottom: 20px;
    width: 179px;
    color: rgba(222, 222, 222, 0.88);
}
.brand {
    display: flex;
    align-items: flex-end;
    height: 60px;
    font: bold 39px/36px "Liberation Sans", sans-serif;
}
.brand svg {
    width: 52px;
    height: 56px;
    margin: 0 2px 3px 1px;
}
.du {
    fill: #555;
    font: bold 25px "Liberation Sans", sans-serif;
}
.brand-cn {
    font: bold 30px/42px "Noto Sans CJK SC", sans-serif;
}
.domain {
    font: 21px/28px "Noto Sans", sans-serif;
}
.speed-ball {
    position: absolute;
    right: -24px;
    bottom: 7px;
    width: 33px;
    height: 33px;
    padding-left: 2px;
    border: 2px solid #e8e8e8;
    border-radius: 50%;
    background: #36b450;
    color: #fff;
    line-height: 28px;
}
```
